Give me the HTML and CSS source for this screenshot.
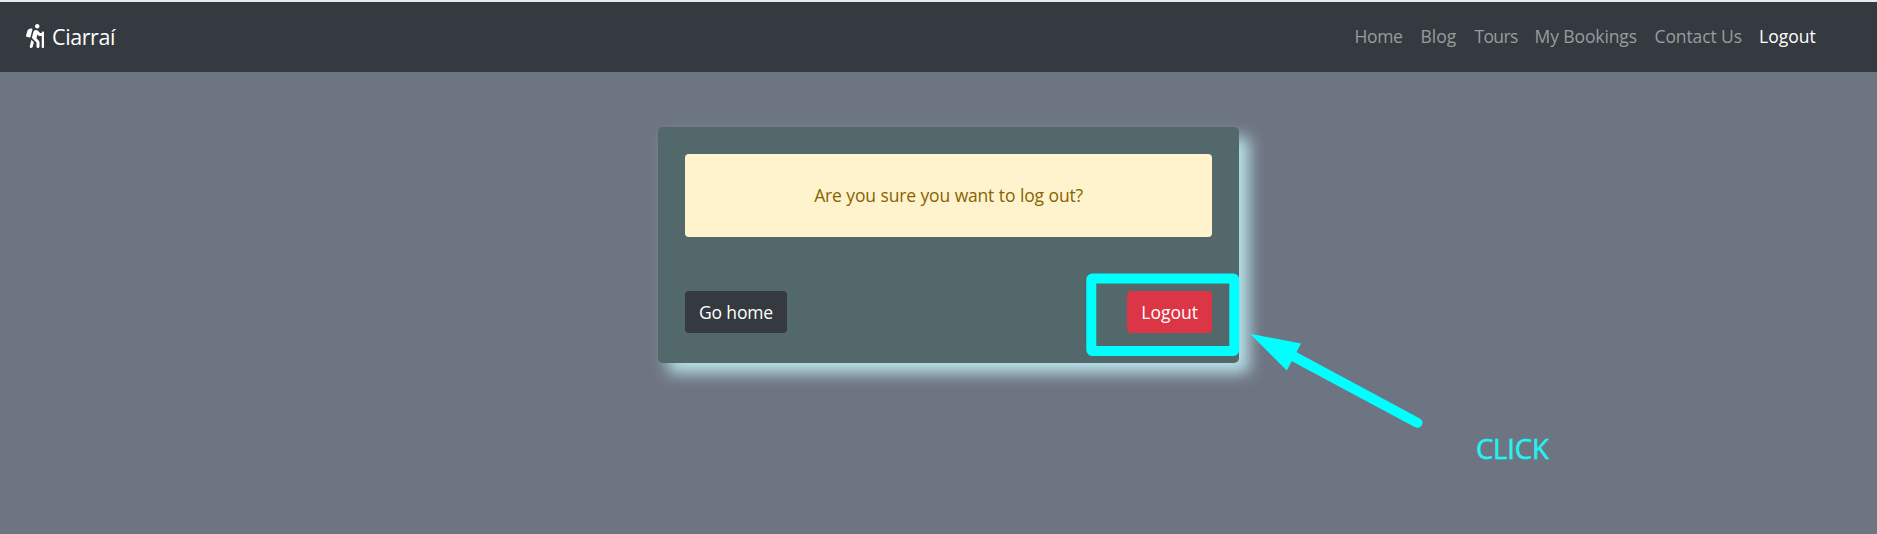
FILE: index.html
```html
<!DOCTYPE html>
<html lang="en">
<head>
<meta charset="utf-8">
<title>Ciarraí - Logout</title>
<link rel="stylesheet" href="styles.css">
</head>
<body>
<header class="navbar">
  <a class="brand">
    <svg class="brand-icon" viewBox="0 0 384 512"><path fill="currentColor" d="M80.95 472.23c-4.28 17.16 6.14 34.53 23.28 38.81 2.61.66 5.22.95 7.8.95 14.33 0 27.37-9.7 31.02-24.23l25.24-100.97-52.78-52.78-34.56 138.22zm14.89-196.12L137 117c2.19-8.42-3.14-16.95-11.92-19.06-43.88-10.52-88.35 15.07-99.32 57.17L.49 253.24c-2.19 8.42 3.14 16.95 11.92 19.06l63.56 15.25c8.79 2.1 17.68-3.02 19.87-11.44zM368 160h-16c-8.84 0-16 7.16-16 16v16h-34.75l-46.78-46.78C243.38 134.11 228.61 128 212.91 128c-27.02 0-50.47 18.3-57.03 44.52l-26.92 107.72a32.012 32.012 0 0 0 8.42 30.39L224 397.25V480c0 17.67 14.33 32 32 32s32-14.33 32-32v-82.75c0-17.09-6.66-33.16-18.75-45.25l-46.82-46.82c.15-.5.49-.89.62-1.41l19.89-79.57 22.43 22.43c6 6 14.14 9.38 22.62 9.38h48v240c0 8.84 7.16 16 16 16h16c8.84 0 16-7.16 16-16V176c.01-8.84-7.15-16-15.99-16zM240 96c26.51 0 48-21.49 48-48S266.51 0 240 0s-48 21.49-48 48 21.49 48 48 48z"/></svg>
    <span>Ciarraí</span>
  </a>
  <nav class="nav">
    <a class="nav-link">Home</a>
    <a class="nav-link loose">Blog</a>
    <a class="nav-link tight">Tours</a>
    <a class="nav-link wide">My Bookings</a>
    <a class="nav-link wide">Contact Us</a>
    <a class="nav-link loose active">Logout</a>
  </nav>
</header>
<main class="page">
  <section class="card">
    <div class="alert">Are you sure you want to log out?</div>
    <div class="actions">
      <a class="btn btn-dark">Go home</a>
      <a class="btn btn-danger loose">Logout</a>
    </div>
  </section>
</main>
<svg class="annotation" viewBox="0 0 1877 534">
  <rect x="1091.3" y="278.5" width="143" height="72.5" rx="1" fill="none" stroke="#00ffff" stroke-width="10" stroke-linejoin="round"/>
  <path d="M1291 355L1417.5 422.8" stroke="#00ffff" stroke-width="10" stroke-linecap="round"/>
  <path d="M1250 333.7L1301 343.5L1286.8 370.5Z" fill="#00ffff"/>
</svg>
<div class="click-note">CLICK</div>
</body>
</html>
```
FILE: styles.css
```css
* { box-sizing: border-box; }
body {
  margin: 0;
  height: 534px;
  overflow: hidden;
  background: #6e7582;
  border-top: 2px solid #e8eaec;
  font-family: "Open Sans", "Noto Sans", sans-serif;
  font-size: 17.5px;
  letter-spacing: -0.4px;
  line-height: 27px;
}
.navbar {
  height: 70px;
  display: flex;
  align-items: center;
  justify-content: space-between;
  padding: 0 60px 2px 26px;
  background: #343a40;
}
.brand {
  display: flex;
  align-items: center;
  gap: 8px;
  color: #fff;
  font-size: 21.5px;
}
.brand-icon { width: 18px; height: 24px; }
.nav {
  display: grid;
  grid-template-columns: 66px 54px 60px 120px 104.5px 58px;
}
.nav-link { color: #999c9f; white-space: nowrap; }
.nav-link.active { color: #fff; }
.loose { letter-spacing: 0; }
.wide { letter-spacing: -0.1px; }
.tight { letter-spacing: -0.65px; }
.page { display: flex; justify-content: center; padding-top: 55px; padding-left: 20px; }
.card {
  width: 581px;
  height: 236px;
  padding: 27px;
  border-radius: 5px;
  background: #53686a;
  box-shadow: 10px 10px 15px #b8e2e8;
}
.alert {
  height: 83px;
  padding: 28px;
  border-radius: 4px;
  background: #fff3cd;
  color: #856404;
  text-align: center;
  letter-spacing: -0.2px;
  word-spacing: 0.4px;
}
.actions { display: flex; justify-content: space-between; margin-top: 54px; }
.btn {
  height: 42px;
  padding: 8px 14px;
  border-radius: 4px;
  color: #fff;
}
.btn-dark { background: #343a40; letter-spacing: -0.15px; }
.btn-danger { background: #dc3545; }
.annotation { position: absolute; left: 0; top: 0; width: 1877px; height: 534px; }
.click-note {
  position: absolute;
  left: 1476px;
  top: 434px;
  font-size: 27.5px;
  font-weight: 500;
  line-height: 30px;
  letter-spacing: -0.2px;
  color: #21f3f6;
  -webkit-text-stroke: 0.5px #21f3f6;
}
```
